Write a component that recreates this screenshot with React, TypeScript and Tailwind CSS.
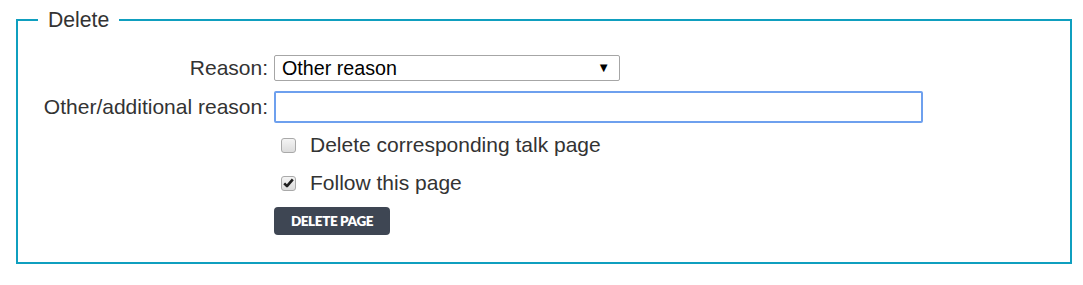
import React from "react";

function Checkbox({ checked }: { checked?: boolean }) {
  return (
    <span className="flex h-[15px] w-[15px] shrink-0 items-center justify-center rounded-[3px] border border-[#a9a9a9] bg-gradient-to-b from-[#f4f4f4] to-[#dcdcdc]">
      {checked && (
        <svg width="11" height="10" viewBox="0 0 11 10">
          <path d="M1.2 5.4 L4 8.2 L9.8 1.4" fill="none" stroke="#1e1e1e" strokeWidth="2.6" strokeLinejoin="round" />
        </svg>
      )}
    </span>
  );
}

export default function App() {
  return (
    <div className="bg-white pl-[16px] pr-[11px] pt-[9px] pb-[20px] font-['Liberation_Sans',Arial,sans-serif] text-[#333]" style={{ height: 285 }}>
      <fieldset className="h-[255px] border-2 border-[#0f9fbf] px-0">
        <legend className="ml-[20px] px-[10px] text-[21.2px] leading-[22px]">Delete</legend>
        <div className="mt-[24px] grid grid-cols-[250px_1fr] items-center gap-x-[6px]">
          <label className="text-right text-[21px] leading-[26px]">Reason:</label>
          <div className="relative h-[26px] w-[346px] rounded-[2px] border border-[#a6a6a6] bg-white">
            <select className="h-full w-full appearance-none bg-transparent pl-[7px] text-[19.7px] leading-[24px] text-black outline-none">
              <option>Other reason</option>
            </select>
            <span className="pointer-events-none absolute right-[9px] top-[4px] text-[13px] leading-[16px] text-black">▼</span>
          </div>

          <label className="mt-[10px] text-right text-[21px] leading-[32px]">Other/additional reason:</label>
          <input className="mt-[10px] h-[32px] w-[649px] rounded-[2px] border-2 border-[#6ea0ee] bg-white px-2 outline-none" />

          <div />
          <label className="mt-[10px] flex items-center gap-[14px] pl-[7px] text-[21px] leading-[24px]">
            <Checkbox />
            <span>Delete corresponding talk page</span>
          </label>

          <div />
          <label className="mt-[14px] flex items-center gap-[14px] pl-[7px] text-[21px] leading-[24px]">
            <Checkbox checked />
            <span>Follow this page</span>
          </label>

          <div />
          <div className="mt-[12px]">
            <button className="h-[28px] w-[116px] rounded-[4px] bg-[#3e4653] font-['Lato',sans-serif] text-[13.5px] font-extrabold tracking-[-0.4px] text-white uppercase">
              Delete page
            </button>
          </div>
        </div>
      </fieldset>
    </div>
  );
}
